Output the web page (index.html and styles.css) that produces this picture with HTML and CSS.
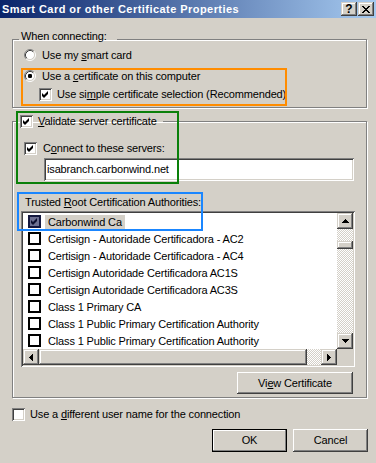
FILE: index.html
```html
<!DOCTYPE html>
<html>
<head>
<meta charset="utf-8">
<title>Smart Card or other Certificate Properties</title>
<link rel="stylesheet" href="styles.css">
</head>
<body>
<div class="window">
  <div class="titlebar">
    <span class="title">Smart Card or other Certificate Properties</span>
    <span class="cap-btn help">?</span>
    <span class="cap-btn close"><svg width="8" height="7" viewBox="0 0 8 7"><path d="M0 0h2v1H0zM6 0h2v1H6zM1 1h2v1H1zM5 1h2v1H5zM2 2h4v1H2zM3 3h2v1H3zM2 4h4v1H2zM1 5h2v1H1zM5 5h2v1H5zM0 6h2v1H0zM6 6h2v1H6z"/></svg></span>
  </div>

  <div class="content">
    <fieldset class="group g1">
      <legend class="g1-legend">When connecting:</legend>
      <div class="opt r1"><span class="radio"><svg width="12" height="12" viewBox="0 0 12 12"><circle cx="6" cy="6" r="4.5" fill="#fff"/><path d="M2.11 9.89A5.5 5.5 0 0 1 9.89 2.11" stroke="#808080" fill="none"/><path d="M9.89 2.11A5.5 5.5 0 0 1 2.11 9.89" stroke="#fff" fill="none"/><path d="M2.82 9.18A4.5 4.5 0 0 1 9.18 2.82" stroke="#404040" fill="none"/><path d="M9.18 2.82A4.5 4.5 0 0 1 2.82 9.18" stroke="#d4d0c8" fill="none"/></svg></span><span>Use my <u>s</u>mart card</span></div>
      <div class="opt r2"><span class="radio"><svg width="12" height="12" viewBox="0 0 12 12"><circle cx="6" cy="6" r="4.5" fill="#fff"/><path d="M2.11 9.89A5.5 5.5 0 0 1 9.89 2.11" stroke="#808080" fill="none"/><path d="M9.89 2.11A5.5 5.5 0 0 1 2.11 9.89" stroke="#fff" fill="none"/><path d="M2.82 9.18A4.5 4.5 0 0 1 9.18 2.82" stroke="#404040" fill="none"/><path d="M9.18 2.82A4.5 4.5 0 0 1 2.82 9.18" stroke="#d4d0c8" fill="none"/><rect x="4" y="4" width="4" height="4" rx="1.2" fill="#000"/></svg></span><span>Use a <u>c</u>ertificate on this computer</span></div>
      <div class="opt c1"><span class="check"><svg width="7" height="7" viewBox="0 0 7 7"><path d="M0 2l2 2 4-4v3l-4 4-2-2z"/></svg></span><span>Use si<u>m</u>ple certificate selection (Recommended)</span></div>
    </fieldset>

    <fieldset class="group g2">
      <legend class="g2-legend"><span class="check"><svg width="7" height="7" viewBox="0 0 7 7"><path d="M0 2l2 2 4-4v3l-4 4-2-2z"/></svg></span><span><u>V</u>alidate server certificate</span></legend>
      <div class="opt c2"><span class="check"><svg width="7" height="7" viewBox="0 0 7 7"><path d="M0 2l2 2 4-4v3l-4 4-2-2z"/></svg></span><span>C<u>o</u>nnect to these servers:</span></div>
      <div class="textbox">isabranch.carbonwind.net</div>
      <div class="list-label">Trusted <u>R</u>oot Certification Authorities:</div>
      <div class="listbox">
        <div class="rows">
          <div class="row"><span class="lcheck on"><svg width="7" height="7" viewBox="0 0 7 7"><path d="M0 2l2 2 4-4v3l-4 4-2-2z"/></svg></span><span class="ltext sel">Carbonwind Ca</span></div>
          <div class="row"><span class="lcheck"></span><span class="ltext">Certisign - Autoridade Certificadora - AC2</span></div>
          <div class="row"><span class="lcheck"></span><span class="ltext">Certisign - Autoridade Certificadora - AC4</span></div>
          <div class="row"><span class="lcheck"></span><span class="ltext">Certisign Autoridade Certificadora AC1S</span></div>
          <div class="row"><span class="lcheck"></span><span class="ltext">Certisign Autoridade Certificadora AC3S</span></div>
          <div class="row"><span class="lcheck"></span><span class="ltext">Class 1 Primary CA</span></div>
          <div class="row"><span class="lcheck"></span><span class="ltext">Class 1 Public Primary Certification Authority</span></div>
          <div class="row"><span class="lcheck"></span><span class="ltext">Class 1 Public Primary Certification Authority</span></div>
        </div>
        <div class="vscroll">
          <span class="sbtn"><svg width="7" height="4" viewBox="0 0 7 4"><path d="M3 0h1v1H3zM2 1h3v1H2zM1 2h5v1H1zM0 3h7v1H0z"/></svg></span>
          <div class="vtrack"><span class="vthumb"></span></div>
          <span class="sbtn"><svg width="7" height="4" viewBox="0 0 7 4"><path d="M0 0h7v1H0zM1 1h5v1H1zM2 2h3v1H2zM3 3h1v1H3z"/></svg></span>
        </div>
        <div class="hscroll">
          <span class="sbtn"><svg width="4" height="7" viewBox="0 0 4 7"><path d="M3 0h1v7H3zM2 1h1v5H2zM1 2h1v3H1zM0 3h1v1H0z"/></svg></span>
          <span class="hthumb"></span>
          <span class="htrack"></span>
          <span class="sbtn"><svg width="4" height="7" viewBox="0 0 4 7"><path d="M0 0h1v7H0zM1 1h1v5H1zM2 2h1v3H2zM3 3h1v1H3z"/></svg></span>
        </div>
        <div class="corner"></div>
      </div>
      <div class="btn-row"><span class="btn view">Vi<u>e</u>w Certificate</span></div>
    </fieldset>

    <div class="opt c3"><span class="check"></span><span>Use a <u>d</u>ifferent user name for the connection</span></div>

    <div class="dlg-buttons">
      <span class="btn default">OK</span>
      <span class="btn">Cancel</span>
    </div>
  </div>

  <div class="annot annot-orange"></div>
  <div class="annot annot-green"></div>
  <div class="annot annot-blue"></div>
</div>
</body>
</html>
```

FILE: styles.css
```css
* { box-sizing: border-box; }
html, body { margin: 0; padding: 0; }
body {
  width: 376px;
  height: 463px;
  overflow: hidden;
  background: #d4d0c8;
  font-family: "Liberation Sans", Arial, sans-serif;
  font-size: 11px;
  line-height: 13px;
  letter-spacing: -0.15px;
  color: #000;
}
u { text-decoration: underline; text-underline-offset: 1px; }

.window { position: relative; width: 376px; height: 463px; }

/* title bar */
.titlebar {
  height: 18px;
  display: flex;
  align-items: center;
  gap: 1px;
  padding: 0 2px 0 2px;
  background: linear-gradient(to right, #0a246a 0%, #a6caf0 100%);
}
.title {
  flex: 1;
  color: #fff;
  font-weight: bold;
  font-size: 11px;
  letter-spacing: 0.45px;
  white-space: nowrap;
}
.cap-btn {
  width: 16px;
  height: 14px;
  display: flex;
  align-items: center;
  justify-content: center;
  background: #d4d0c8;
  box-shadow: inset -1px -1px #404040, inset 1px 1px #d4d0c8, inset -2px -2px #808080, inset 2px 2px #fff;
  font-weight: bold;
  font-size: 12px;
  line-height: 12px;
  letter-spacing: 0;
}
.cap-btn svg { display: block; }

/* content */
.content { padding: 0 8px 0 12px; }

.group {
  margin: 0;
  border: 1px solid #808080;
  box-shadow: inset 1px 1px 0 #fff, 1px 1px 0 #fff;
  min-width: 0;
  width: 355px;
}
.g1 {
  margin-top: 12px;
  padding: 0 11px 6px 11px;
}
.g1-legend {
  padding: 0 10px 6px 2px;
  margin-left: -5px;
  line-height: 13px;
}
.g2 {
  margin-top: 7px;
  padding: 14px 11px 3px 11px;
}
.g2-legend {
  display: flex;
  align-items: center;
  gap: 5px;
  padding: 0 6px 0 3px;
  margin-left: -7px;
  height: 13px;
}

.opt {
  display: flex;
  align-items: center;
  white-space: nowrap;
}
.r1 { height: 12px; gap: 6px; }
.r2 { height: 12px; gap: 6px; margin-top: 9px; }
.c1 { height: 13px; gap: 5px; margin-top: 6px; margin-left: 15px; }
.c2 { height: 13px; gap: 6px; }
.c3 { height: 13px; gap: 5px; margin-top: 10px; }

.radio { width: 12px; height: 12px; display: block; flex: none; }
.radio svg { display: block; }

.check {
  width: 13px;
  height: 13px;
  flex: none;
  background: #fff;
  box-shadow: inset 1px 1px #808080, inset -1px -1px #fff, inset 2px 2px #404040, inset -2px -2px #d4d0c8;
  display: flex;
  align-items: center;
  justify-content: center;
}
.check svg { display: block; }

.textbox {
  margin: 3px 1px 0 20px;
  height: 23px;
  background: #fff;
  box-shadow: inset 1px 1px #808080, inset -1px -1px #fff, inset 2px 2px #404040, inset -2px -2px #d4d0c8;
  padding: 5px 3px 0 3px;
  white-space: nowrap;
}
.list-label { margin: 15px 0 0 1px; }

/* list */
.listbox {
  margin: 2px 0 0 -3px;
  height: 156px;
  padding: 2px;
  background: #fff;
  box-shadow: inset 1px 1px #808080, inset -1px -1px #fff, inset 2px 2px #404040, inset -2px -2px #d4d0c8;
  display: grid;
  grid-template-columns: 1fr 16px;
  grid-template-rows: 1fr 16px;
}
.rows { overflow: hidden; }
.row {
  height: 17px;
  display: flex;
  align-items: center;
  padding-left: 5px;
  white-space: nowrap;
}
.lcheck {
  width: 13px;
  height: 13px;
  flex: none;
  border: 2px solid #000;
  background: #fff;
  display: flex;
  align-items: center;
  justify-content: center;
}
.lcheck.on { background: #6e7192; border-color: #14183f; }
.lcheck.on svg { fill: #0d1030; }
.ltext { margin-left: 4px; padding: 0 3px; line-height: 14px; }
.ltext.sel { background: #d4d0c8; }

.sbtn {
  width: 16px;
  height: 16px;
  flex: none;
  display: flex;
  align-items: center;
  justify-content: center;
  background: #d4d0c8;
  box-shadow: inset -1px -1px #404040, inset 1px 1px #d4d0c8, inset -2px -2px #808080, inset 2px 2px #fff;
}
.sbtn svg { display: block; }
.vscroll { display: flex; flex-direction: column; }
.vtrack {
  flex: 1;
  background: repeating-conic-gradient(#d4d0c8 0 25%, #fff 0 50%) 0 0 / 2px 2px;
  padding-top: 12px;
}
.vthumb, .hthumb {
  display: block;
  background: #d4d0c8;
  box-shadow: inset -1px -1px #404040, inset 1px 1px #d4d0c8, inset -2px -2px #808080, inset 2px 2px #fff;
}
.vthumb { height: 8px; }
.hscroll { display: flex; }
.hthumb { width: 268px; height: 16px; flex: none; }
.htrack {
  flex: 1;
  background: repeating-conic-gradient(#d4d0c8 0 25%, #fff 0 50%) 0 0 / 2px 2px;
}
.corner { background: #d4d0c8; }

/* buttons */
.btn-row { display: flex; justify-content: flex-end; margin: 5px 2px 0 0; }
.btn {
  display: flex;
  align-items: center;
  justify-content: center;
  height: 23px;
  width: 75px;
  background: #d4d0c8;
  box-shadow: inset -1px -1px #404040, inset 1px 1px #fff, inset -2px -2px #808080, inset 2px 2px #d4d0c8;
  white-space: nowrap;
}
.btn.view { width: 116px; height: 22px; }
.btn.default {
  border: 1px solid #000;
  box-shadow: inset -1px -1px #808080, inset 1px 1px #fff;
}
.dlg-buttons {
  display: flex;
  justify-content: flex-end;
  gap: 6px;
  margin-top: 8px;
}

/* annotation overlays */
.annot { position: absolute; border: 2px solid; }
.annot-orange { left: 21px; top: 68px; width: 266px; height: 38px; border-color: #ff8c00; }
.annot-green { left: 16px; top: 111px; width: 163px; height: 73px; border-color: #0a800a; }
.annot-blue { left: 17px; top: 192px; width: 186px; height: 39px; border-color: #1a86ff; }
```
